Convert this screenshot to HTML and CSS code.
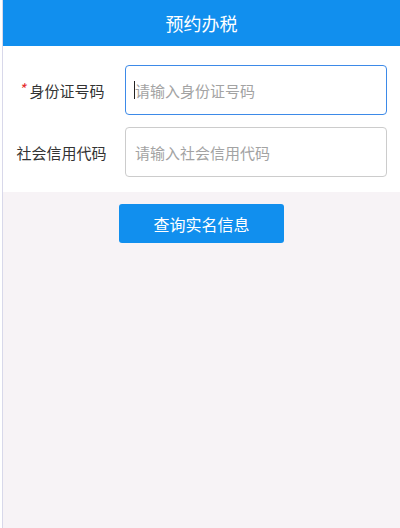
FILE: index.html
```html
<!DOCTYPE html>
<html lang="zh-CN">
<head>
<meta charset="utf-8">
<title>预约办税</title>
<link rel="stylesheet" href="styles.css">
</head>
<body>
<div class="page">
  <header class="header">预约办税</header>
  <section class="form">
    <div class="row">
      <label class="label"><span class="req">*</span>身份证号码</label>
      <div class="field">
        <input class="input input-focus" type="text" placeholder="请输入身份证号码">
        <span class="caret"></span>
      </div>
    </div>
    <div class="row">
      <label class="label">社会信用代码</label>
      <div class="field">
        <input class="input" type="text" placeholder="请输入社会信用代码">
      </div>
    </div>
  </section>
  <div class="actions">
    <button class="btn" type="button">查询实名信息</button>
  </div>
</div>
</body>
</html>
```
FILE: styles.css
```css
html, body {
  margin: 0;
  padding: 0;
  background: #ffffff;
}
body {
  padding-left: 2px;
  font-family: "Noto Sans CJK SC", "Noto Sans", sans-serif;
}
.page {
  border-left: 1px solid #d8d8ea;
  background: #f7f3f6;
  min-height: 528px;
  box-sizing: border-box;
}
.header {
  height: 46px;
  background: #118fee;
  color: #ffffff;
  font-size: 18px;
  line-height: 46px;
  text-align: center;
}
.form {
  background: #ffffff;
  padding: 19px 13px 15px 0;
  display: flex;
  flex-direction: column;
  gap: 12px;
}
.row {
  display: flex;
  align-items: center;
  height: 50px;
}
.label {
  width: 117px;
  margin-right: 5px;
  text-align: center;
  font-size: 15px;
  color: #333333;
}
.req {
  color: #e52d2d;
  font-size: 15px;
  font-style: italic;
  margin-right: 4px;
  position: relative;
  top: -2px;
}
.field {
  flex: 1;
  min-width: 0;
  position: relative;
  display: flex;
}
.input {
  flex: 1;
  min-width: 0;
  height: 50px;
  box-sizing: border-box;
  border: 1px solid #cccccc;
  border-radius: 4px;
  padding: 0 9px;
  font-family: inherit;
  font-size: 15px;
  color: #333333;
  outline: none;
  background: #ffffff;
}
.input::placeholder {
  color: #a3a3a3;
}
.input-focus {
  border-color: #3d8ae8;
}
.caret {
  position: absolute;
  left: 9px;
  top: 16px;
  width: 1px;
  height: 18px;
  background: #222222;
}
.actions {
  display: flex;
  justify-content: center;
  padding-top: 12px;
}
.btn {
  width: 165px;
  height: 39px;
  border: none;
  border-radius: 3px;
  background: #118fee;
  color: #ffffff;
  font-family: inherit;
  font-size: 16px;
  cursor: pointer;
}
```
